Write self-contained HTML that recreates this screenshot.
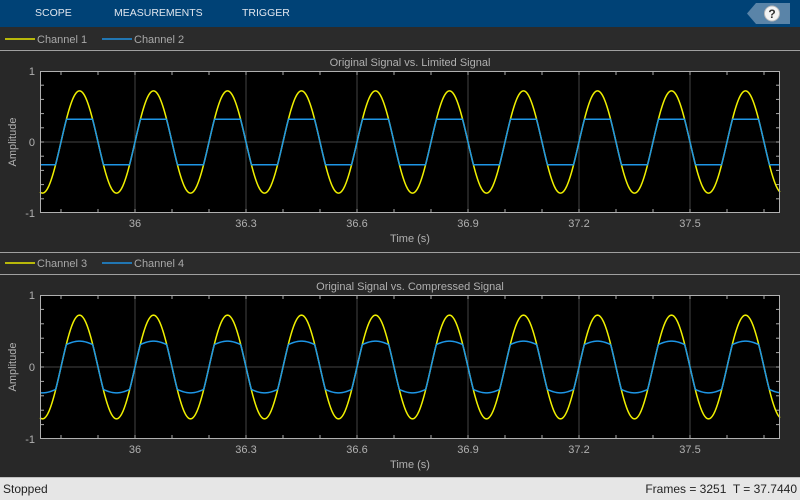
<!DOCTYPE html>
<html><head><meta charset="utf-8"><style>
*{margin:0;padding:0;box-sizing:border-box}
body{width:800px;height:500px;background:#282828;font-family:"Liberation Sans",sans-serif;position:relative;overflow:hidden}
.tb{position:absolute;left:0;top:0;width:800px;height:27px;background:#004276;color:#e0e6ee;font-size:10.5px}
.tb span{position:absolute;top:7px}
.leg{position:absolute;left:0;width:800px;height:22px;background:#2b2b2b;font-size:11px;color:#a8a8a8}
.sep{position:absolute;left:0;width:800px;height:1px;background:#a0a0a0}
.status{position:absolute;left:0;top:477px;width:800px;height:23px;background:#e6e6e6;border-top:1px solid #c0c0c0;font-size:12px;color:#222}
svg{position:absolute;left:0;top:0}
</style></head><body>
<div class="tb"><span style="left:35px">SCOPE</span><span style="left:114px">MEASUREMENTS</span><span style="left:242px">TRIGGER</span>
<svg width="800" height="27"><polygon points="756,3 790,3 790,24 756,24 747,13.5" fill="#5a84a8"/><circle cx="772" cy="13.5" r="7.5" fill="#f4f4f4" stroke="#bbb"/><text x="772" y="18" font-size="12" font-weight="bold" text-anchor="middle" fill="#333" font-family="Liberation Sans">?</text></svg></div>
<div class="leg" style="top:27px"></div>
<div class="sep" style="top:50px"></div>
<div class="leg" style="top:252px"></div>
<div class="sep" style="top:252px"></div>
<div class="sep" style="top:274px"></div>
<svg id="s" width="800" height="477" font-family="Liberation Sans" font-size="11"></svg>
<div class="status"><span style="position:absolute;left:3px;top:4px">Stopped</span><span style="position:absolute;right:3px;top:4px">Frames = 3251&nbsp; T = 37.7440</span></div>
<script>
var s=document.getElementById('s'),h='';
function leg(y,a,b){h+='<line x1="5" x2="35" y1="'+y+'" y2="'+y+'" stroke="#e8e800" stroke-width="1.5"/><text x="37" y="'+(y+4)+'" fill="#a8a8a8">'+a+'</text><line x1="102" x2="132" y1="'+y+'" y2="'+y+'" stroke="#1e90e0" stroke-width="1.5"/><text x="134" y="'+(y+4)+'" fill="#a8a8a8">'+b+'</text>';}
leg(39,'Channel 1','Channel 2');leg(263,'Channel 3','Channel 4');
function plot(top,bot,title,f){
 var z=(top+bot)/2,k=(bot-top)/2;
 h+='<text x="410" y="'+(top-5)+'" text-anchor="middle" fill="#b0b0b0">'+title+'</text>';
 h+='<rect x="40" y="'+top+'" width="740" height="'+(bot-top)+'" fill="#000"/>';
 var L=['36','36.3','36.6','36.9','37.2','37.5'];
 for(var i=0;i<6;i++){var x=135+111*i;h+='<line x1="'+x+'" x2="'+x+'" y1="'+top+'" y2="'+bot+'" stroke="#444"/><text x="'+x+'" y="'+(bot+14)+'" text-anchor="middle" fill="#b0b0b0">'+L[i]+'</text>';}
 h+='<line x1="40" x2="780" y1="'+z+'" y2="'+z+'" stroke="#444"/>';
 for(var x=135-111;x<780;x+=37){if(x<=40)continue;h+='<line x1="'+x+'" x2="'+x+'" y1="'+top+'" y2="'+(top+4)+'" stroke="#aaa"/><line x1="'+x+'" x2="'+x+'" y1="'+bot+'" y2="'+(bot-4)+'" stroke="#aaa"/>';}
 for(var j=-4;j<=4;j++){var y=z-j*k/5;h+='<line x1="40" x2="44" y1="'+y+'" y2="'+y+'" stroke="#aaa"/><line x1="780" x2="776" y1="'+y+'" y2="'+y+'" stroke="#aaa"/>';}
 var p1='',p2='';
 for(var x=40;x<=780;x+=0.5){var v=0.72*Math.sin(2*Math.PI*(x-135)/74);p1+=x+','+(z-v*k).toFixed(2)+' ';p2+=x+','+(z-f(v)*k).toFixed(2)+' ';}
 h+='<polyline points="'+p1+'" fill="none" stroke="#f0f000" stroke-width="1.5"/><polyline points="'+p2+'" fill="none" stroke="#1e96e6" stroke-width="1.5"/>';
 h+='<rect x="40.5" y="'+(top+0.5)+'" width="739" height="'+(bot-top-1)+'" fill="none" stroke="#b0b0b0"/>';
 h+='<text x="35" y="'+(top+4)+'" text-anchor="end" fill="#b0b0b0">1</text><text x="35" y="'+(z+4)+'" text-anchor="end" fill="#b0b0b0">0</text><text x="35" y="'+(bot+4)+'" text-anchor="end" fill="#b0b0b0">-1</text>';
 h+='<text transform="translate(16,'+z+') rotate(-90)" text-anchor="middle" fill="#b0b0b0">Amplitude</text><text x="410" y="'+(bot+29)+'" text-anchor="middle" fill="#b0b0b0">Time (s)</text>';
}
plot(71,213,'Original Signal vs. Limited Signal',function(v){return Math.max(-0.32,Math.min(0.32,v));});
plot(295,439,'Original Signal vs. Compressed Signal',function(v){var a=Math.abs(v),T=0.31;return a>T?Math.sign(v)*(T+(a-T)*0.12):v;});
s.innerHTML=h;
</script>
</body></html>
